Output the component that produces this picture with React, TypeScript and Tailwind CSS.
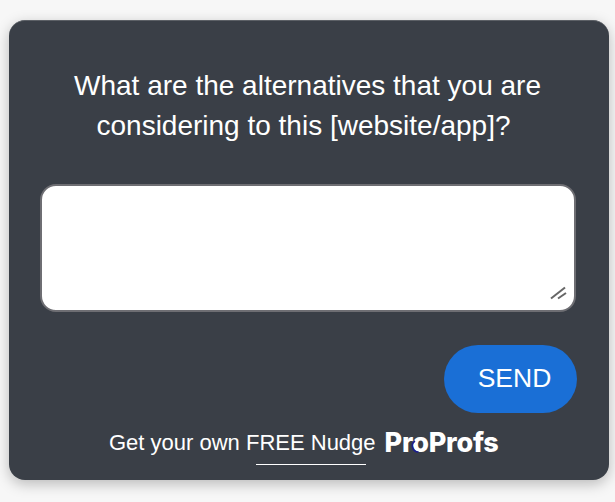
export default function App() {
	return (
		<div className="h-[502px] w-[615px] overflow-hidden bg-[#f7f7f7] pl-[9px] pt-[20px] font-['Liberation_Sans',Arial,sans-serif]">
			<section className="flex h-[460px] w-[600px] flex-col rounded-[16px] border-t border-[#5c6066] bg-[#3a3f47] shadow-[0_4px_14px_rgba(0,0,0,0.25)]">
				<h1 className="mx-auto mt-[45px] w-[500px] pr-[3px] text-center text-[28px] leading-[40px] font-normal text-white">
					<span className="block">What are the alternatives that you are</span>
					<span className="block pr-[8px]">considering to this [website/app]?</span>
				</h1>
				<div className="relative mt-[38px] px-[31px]">
					<textarea
						aria-label="Your answer"
						className="block h-[128px] w-[536px] resize-none rounded-[16px] border-2 border-[#6e6e73] bg-white p-2 outline-none"
					/>
					<svg className="absolute top-[102px] left-[540px] h-[16px] w-[18px]" viewBox="0 0 18 16" fill="none" stroke="#666666" strokeWidth="2">
						<path d="M2 12.5 L16 1.5" />
						<path d="M9 12.5 L17 7" />
					</svg>
				</div>
				<div className="mt-[33px] flex justify-end pr-[32px]">
					<button className="h-[68px] w-[133px] rounded-full bg-[#1a6fd6] pl-[8px] text-[26.5px] text-white">SEND</button>
				</div>
				<div className="mt-[16px] flex items-center gap-[9px] pl-[100px]">
					<a className="relative text-[22px] leading-[28px] text-white">
						Get your own FREE Nudge
						<span className="absolute top-[35px] left-[147px] h-px w-[110px] bg-white" />
					</a>
					<span className="relative font-['Inter',sans-serif] text-[27px] leading-[28px] font-extrabold tracking-[-0.25px] text-white">
						ProProfs
						<svg className="absolute top-0 left-0 h-[28px] w-[44px]" viewBox="0 0 44 28" fill="none" stroke="#1c1c8f" strokeWidth="1.5">
							<path d="M30 12 A6 6 0 0 0 33.5 23" />
						</svg>
					</span>
				</div>
			</section>
		</div>
	);
}
